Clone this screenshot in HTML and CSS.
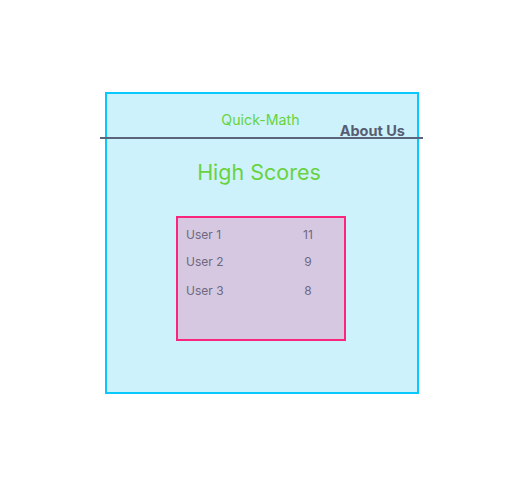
FILE: index.html
```html
<!DOCTYPE html>
<html>
<head>
<meta charset="utf-8">
<link rel="stylesheet" href="styles.css">
</head>
<body>
<div class="frame">
  <header class="header">
    <div class="title">Quick-Math</div>
    <a class="about">About Us</a>
  </header>
  <h1 class="heading">High Scores</h1>
  <div class="scores">
    <div class="row row1"><span class="name">User 1</span><span class="score">11</span></div>
    <div class="row row2"><span class="name">User 2</span><span class="score">9</span></div>
    <div class="row row3"><span class="name">User 3</span><span class="score">8</span></div>
  </div>
</div>
</body>
</html>
```
FILE: styles.css
```css
html, body {
  margin: 0;
  padding: 0;
  background: #ffffff;
}
body {
  font-family: Inter, "Noto Sans", sans-serif;
  padding: 92px 0 0 105px;
}
.frame {
  width: 310px;
  height: 298px;
  border: 2px solid #08c8fc;
  background: #cdf2fc;
  display: flex;
  flex-direction: column;
}
.header {
  margin: 0 -6px 0 -7px;
  height: 43px;
  border-bottom: 2px solid #5b6478;
  display: grid;
  grid-template-columns: 1fr auto 1fr;
}
.title {
  grid-column: 2;
  padding-top: 17px;
  font-size: 14.2px;
  line-height: 17px;
  color: #68d33d;
  margin-left: -2px;
}
.about {
  grid-column: 3;
  justify-self: end;
  align-self: end;
  padding-right: 18px;
  margin-bottom: -2px;
  font-size: 14.5px;
  line-height: 17px;
  font-weight: 700;
  color: #585d72;
}
.heading {
  margin: 20px 0 0 -6px;
  text-align: center;
  font-size: 21.5px;
  line-height: 26px;
  font-weight: 400;
  color: #6ad23f;
}
.scores {
  margin: 31px 0 0 69px;
  width: 166px;
  height: 121px;
  border: 2px solid #fa267e;
  background: #d7c8e2;
  box-sizing: content-box;
  padding: 0;
}
.row {
  display: flex;
  font-size: 12px;
  line-height: 15px;
  color: #6b6880;
}
.row1 { margin-top: 9px; }
.row2 { margin-top: 12px; }
.row3 { margin-top: 14px; }
.name {
  padding-left: 8px;
  width: 92px;
}
.score {
  width: 60px;
  text-align: center;
}
```
